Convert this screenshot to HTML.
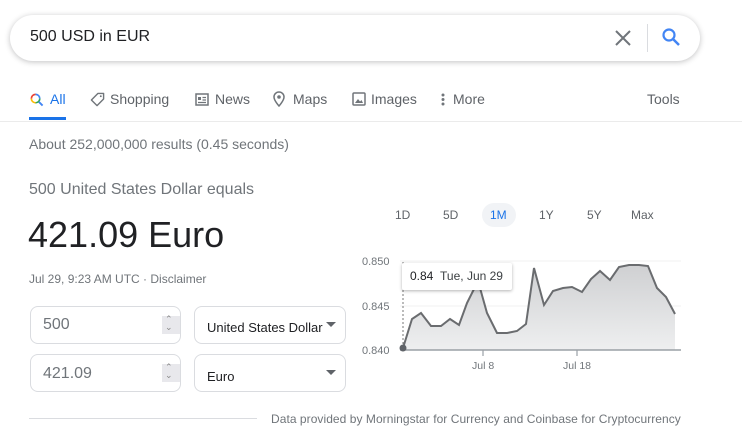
<!DOCTYPE html>
<html><head><meta charset="utf-8"><style>
*{margin:0;padding:0;box-sizing:border-box}
body{width:742px;height:442px;overflow:hidden;background:#fff;font-family:"Liberation Sans",Arial,sans-serif;position:relative;color:#202124}
.abs{position:absolute;white-space:nowrap}
.search{left:10px;top:15px;width:690px;height:46px;border-radius:23px;box-shadow:0 1px 6px rgba(32,33,36,.28);background:#fff}
.tab{top:91px;font-size:14px;color:#5f6368}
.inp{border:1px solid #dadce0;border-radius:8px;height:38px;background:#fff}
.tf{font-size:16px;color:#70757a}
</style></head><body>
<div class="abs search"></div>
<div class="abs" style="left:30px;top:28px;font-size:16px;color:#202124">500 USD in EUR</div>
<svg class="abs" style="left:613px;top:28px" width="20" height="20" viewBox="0 0 20 20"><path d="M3 3L17 17M17 3L3 17" stroke="#70757a" stroke-width="2"/></svg>
<div class="abs" style="left:647px;top:24px;width:1px;height:28px;background:#dadce0"></div>
<svg class="abs" style="left:661px;top:27px" width="20" height="20" viewBox="0 0 20 20"><circle cx="8" cy="8" r="5.5" stroke="#4285f4" stroke-width="2.2" fill="none"/><path d="M12 12L18 18" stroke="#4285f4" stroke-width="2.5"/></svg>

<svg class="abs" style="left:29px;top:92px" width="15" height="15" viewBox="0 0 16 16"><path d="M2.5 7A4.5 4.5 0 0 1 7 2.5" stroke="#ea4335" stroke-width="1.8" fill="none"/><path d="M7 2.5A4.5 4.5 0 0 1 11.5 7" stroke="#4285f4" stroke-width="1.8" fill="none"/><path d="M11.5 7A4.5 4.5 0 0 1 7 11.5" stroke="#34a853" stroke-width="1.8" fill="none"/><path d="M7 11.5A4.5 4.5 0 0 1 2.5 7" stroke="#fbbc05" stroke-width="1.8" fill="none"/><path d="M10.5 10.5L14.5 14.5" stroke="#4285f4" stroke-width="2"/></svg>
<div class="abs tab" style="left:50px;color:#1a73e8">All</div>
<div class="abs" style="left:29px;top:117px;width:37px;height:3px;background:#1a73e8"></div>
<svg class="abs" style="left:90px;top:92px" width="15" height="15" viewBox="0 0 16 16"><path d="M8.5 1.5H14.5V7.5L7.5 14.5L1.5 8.5Z" stroke="#70757a" stroke-width="1.5" fill="none" stroke-linejoin="round"/><circle cx="11.5" cy="4.5" r="1" fill="#70757a"/></svg>
<div class="abs tab" style="left:110px">Shopping</div>
<svg class="abs" style="left:195px;top:93px" width="14" height="13" viewBox="0 0 14 13"><rect x="1" y="1" width="12" height="11" stroke="#70757a" stroke-width="1.5" fill="none"/><rect x="3" y="4" width="3" height="3" fill="#70757a"/><path d="M7.5 4.5H11M7.5 7H11M3 9.5H11" stroke="#70757a" stroke-width="1.2"/></svg>
<div class="abs tab" style="left:215px">News</div>
<svg class="abs" style="left:273px;top:91px" width="12" height="16" viewBox="0 0 12 16"><path d="M6 15C6 15 1 9.5 1 6A5 5 0 0 1 11 6C11 9.5 6 15 6 15Z" stroke="#70757a" stroke-width="1.5" fill="none"/><circle cx="6" cy="6" r="1.8" fill="#70757a"/></svg>
<div class="abs tab" style="left:293px">Maps</div>
<svg class="abs" style="left:352px;top:92px" width="14" height="14" viewBox="0 0 14 14"><rect x="1" y="1" width="12" height="12" rx="1" stroke="#70757a" stroke-width="1.5" fill="none"/><path d="M3 11L6 7L8 9.5L9.5 8L11 11Z" fill="#70757a"/></svg>
<div class="abs tab" style="left:371px">Images</div>
<svg class="abs" style="left:441px;top:92px" width="4" height="15" viewBox="0 0 4 15"><circle cx="2" cy="3" r="1.5" fill="#70757a"/><circle cx="2" cy="7.5" r="1.5" fill="#70757a"/><circle cx="2" cy="12" r="1.5" fill="#70757a"/></svg>
<div class="abs tab" style="left:453px">More</div>
<div class="abs tab" style="left:647px">Tools</div>
<div class="abs" style="left:0;top:121px;width:742px;height:1px;background:#ebebeb"></div>

<div class="abs" style="left:29px;top:136px;font-size:14px;color:#70757a">About 252,000,000 results (0.45 seconds)</div>
<div class="abs" style="left:29px;top:181px;font-size:16px;color:#70757a">500 United States Dollar equals</div>
<div class="abs" style="left:28px;top:214px;font-size:36px;color:#202124">421.09 Euro</div>
<div class="abs" style="left:29px;top:272px;font-size:12px;color:#70757a">Jul 29, 9:23 AM UTC · Disclaimer</div>

<div class="abs inp" style="left:30px;top:306px;width:151px"></div>
<div class="abs tf" style="left:43px;top:316px">500</div>
<div class="abs" style="left:162px;top:316px;width:18px;height:18px;background:#e8e8ec"></div>
<div class="abs" style="left:165px;top:315px;font-size:9px;color:#888;line-height:8px">&#8963;<br>&#8964;</div>
<div class="abs inp" style="left:194px;top:306px;width:152px"></div>
<div class="abs" style="left:207px;top:320px;font-size:13px;color:#202124">United States Dollar</div>
<div class="abs" style="left:326px;top:322px;width:0;height:0;border-left:5px solid transparent;border-right:5px solid transparent;border-top:5px solid #5f6368"></div>

<div class="abs inp" style="left:30px;top:354px;width:151px"></div>
<div class="abs tf" style="left:43px;top:365px">421.09</div>
<div class="abs" style="left:162px;top:364px;width:18px;height:18px;background:#e8e8ec"></div>
<div class="abs" style="left:165px;top:363px;font-size:9px;color:#888;line-height:8px">&#8963;<br>&#8964;</div>
<div class="abs inp" style="left:194px;top:354px;width:152px"></div>
<div class="abs" style="left:207px;top:369px;font-size:13px;color:#202124">Euro</div>
<div class="abs" style="left:326px;top:370px;width:0;height:0;border-left:5px solid transparent;border-right:5px solid transparent;border-top:5px solid #5f6368"></div>

<div class="abs" style="left:29px;top:418px;width:228px;height:1px;background:#dadce0"></div>
<div class="abs" style="left:271px;top:412px;font-size:12px;letter-spacing:0.05px;color:#70757a">Data provided by Morningstar for Currency and Coinbase for Cryptocurrency</div>

<div class="abs" style="left:482px;top:203px;width:34px;height:24px;border-radius:12px;background:#f1f3f6"></div>
<div class="abs" style="top:208px;font-size:12px;color:#5f6368;left:395px">1D</div>
<div class="abs" style="top:208px;font-size:12px;color:#5f6368;left:443px">5D</div>
<div class="abs" style="top:208px;font-size:12px;color:#1a73e8;left:490px">1M</div>
<div class="abs" style="top:208px;font-size:12px;color:#5f6368;left:539px">1Y</div>
<div class="abs" style="top:208px;font-size:12px;color:#5f6368;left:587px">5Y</div>
<div class="abs" style="top:208px;font-size:12px;color:#5f6368;left:631px">Max</div>

<svg class="abs" style="left:350px;top:250px" width="340" height="125" viewBox="350 250 340 125">
<defs><linearGradient id="g" x1="0" y1="0" x2="0" y2="1"><stop offset="0" stop-color="#cfd0d2"/><stop offset="1" stop-color="#eeeff0"/></linearGradient></defs>
<path d="M400 261H681M400 306H681" stroke="#f1f1f1" stroke-width="1"/>
<path d="M403 348L412 319L421 313L431 326L441 326L450 319L459 325L467 303L474 289L480 288L487 313L497 333L507 333L517 331L526 324L534 268L544 305L553 291L563 288L572 287L582 292L591 279L600 271L610 280L619 267L629 265L639 265L648 266L657 288L666 297L675 314L675 350L403 350Z" fill="url(#g)"/>
<path d="M403 348L412 319L421 313L431 326L441 326L450 319L459 325L467 303L474 289L480 288L487 313L497 333L507 333L517 331L526 324L534 268L544 305L553 291L563 288L572 287L582 292L591 279L600 271L610 280L619 267L629 265L639 265L648 266L657 288L666 297L675 314" fill="none" stroke="#6a6c6f" stroke-width="2"/>
<path d="M403 262V348" stroke="#777" stroke-width="1" stroke-dasharray="2,2"/>
<path d="M400 350H681" stroke="#9aa0a6" stroke-width="1.5"/>
<path d="M483 350V356M577 350V356" stroke="#9aa0a6" stroke-width="1.2"/>
<circle cx="403" cy="348" r="3.5" fill="#5f6368"/>
<text x="362" y="265" font-size="11" fill="#70757a" font-family="Liberation Sans,sans-serif">0.850</text>
<text x="362" y="310" font-size="11" fill="#70757a" font-family="Liberation Sans,sans-serif">0.845</text>
<text x="362" y="354" font-size="11" fill="#70757a" font-family="Liberation Sans,sans-serif">0.840</text>
<text x="472" y="369" font-size="10.5" fill="#70757a" font-family="Liberation Sans,sans-serif">Jul 8</text>
<text x="563" y="369" font-size="10.5" fill="#70757a" font-family="Liberation Sans,sans-serif">Jul 18</text>
</svg>
<div class="abs" style="left:402px;top:263px;width:110px;height:27px;background:#fff;box-shadow:0 1px 3px rgba(0,0,0,.3);border-radius:2px"></div>
<div class="abs" style="left:410px;top:269px;font-size:12px;color:#202124">0.84 <span style="color:#3c4043">&nbsp;Tue, Jun 29</span></div>
</body></html>
